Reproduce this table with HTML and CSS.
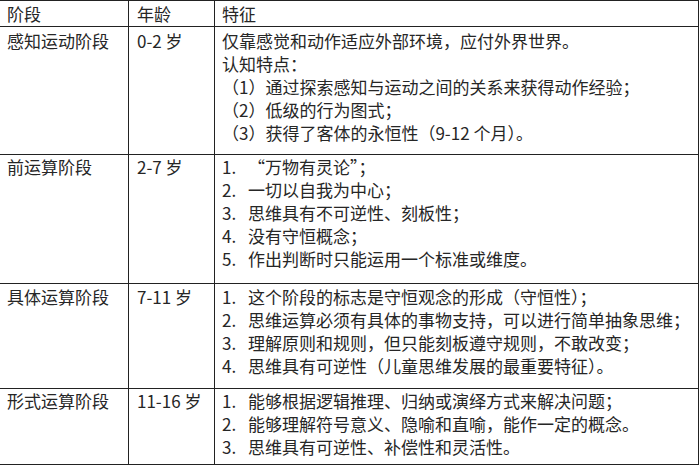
FILE: index.html
```html
<!DOCTYPE html>
<html lang="zh">
<head>
<meta charset="utf-8">
<link rel="stylesheet" href="styles.css">
</head>
<body>
<div class="table">
  <div class="cell head c1">阶段</div>
  <div class="cell head c2">年龄</div>
  <div class="cell head c3">特征</div>

  <div class="cell r1 c1">感知运动阶段</div>
  <div class="cell r1 c2">0-2 岁</div>
  <div class="cell r1 c3">
    <div class="line">仅靠感觉和动作适应外部环境，应付外界世界。</div>
    <div class="line">认知特点：</div>
    <div class="line">（1）通过探索感知与运动之间的关系来获得动作经验；</div>
    <div class="line">（2）低级的行为图式；</div>
    <div class="line">（3）获得了客体的永恒性（9-12 个月）。</div>
  </div>

  <div class="cell r2 c1">前运算阶段</div>
  <div class="cell r2 c2">2-7 岁</div>
  <div class="cell r2 c3">
    <div class="line"><span class="num">1.</span>“万物有灵论”；</div>
    <div class="line"><span class="num">2.</span>一切以自我为中心；</div>
    <div class="line"><span class="num">3.</span>思维具有不可逆性、刻板性；</div>
    <div class="line"><span class="num">4.</span>没有守恒概念；</div>
    <div class="line"><span class="num">5.</span>作出判断时只能运用一个标准或维度。</div>
  </div>

  <div class="cell r3 c1">具体运算阶段</div>
  <div class="cell r3 c2">7-11 岁</div>
  <div class="cell r3 c3">
    <div class="line"><span class="num">1.</span>这个阶段的标志是守恒观念的形成（守恒性）；</div>
    <div class="line"><span class="num">2.</span>思维运算必须有具体的事物支持，可以进行简单抽象思维；</div>
    <div class="line"><span class="num">3.</span>理解原则和规则，但只能刻板遵守规则，不敢改变；</div>
    <div class="line"><span class="num">4.</span>思维具有可逆性（儿童思维发展的最重要特征）。</div>
  </div>

  <div class="cell r4 c1">形式运算阶段</div>
  <div class="cell r4 c2">11-16 岁</div>
  <div class="cell r4 c3">
    <div class="line"><span class="num">1.</span>能够根据逻辑推理、归纳或演绎方式来解决问题；</div>
    <div class="line"><span class="num">2.</span>能够理解符号意义、隐喻和直喻，能作一定的概念。</div>
    <div class="line"><span class="num">3.</span>思维具有可逆性、补偿性和灵活性。</div>
  </div>
</div>
</body>
</html>
```

FILE: styles.css
```css
html, body {
  margin: 0;
  padding: 0;
  background: #fff;
}

body {
  width: 700px;
  height: 470px;
  overflow: hidden;
  font-family: "Noto Sans CJK SC", "Liberation Sans", sans-serif;
  font-size: 17px;
  color: #262626;
}

.table {
  margin-left: -1px;
  width: 700px;
  box-sizing: border-box;
  padding: 1px;
  background: #222;
  display: grid;
  grid-template-columns: 128px 85px 483px;
  grid-template-rows: 25px 127px 128px 104px 75px;
  gap: 1px;
}

.cell {
  background: #fff;
  line-height: 23px;
  white-space: nowrap;
  overflow: hidden;
}

.c1 { padding-left: 7px; }
.c2 { padding-left: 8px; }
.c3 { padding-left: 7px; }

.head { padding-top: 1px; }
.r1 { padding-top: 2px; }
.r2 { padding-top: 0; }
.r3 { padding-top: 1px; }
.r4 { padding-top: 0; }

.num {
  display: inline-block;
  width: 26px;
}
```
